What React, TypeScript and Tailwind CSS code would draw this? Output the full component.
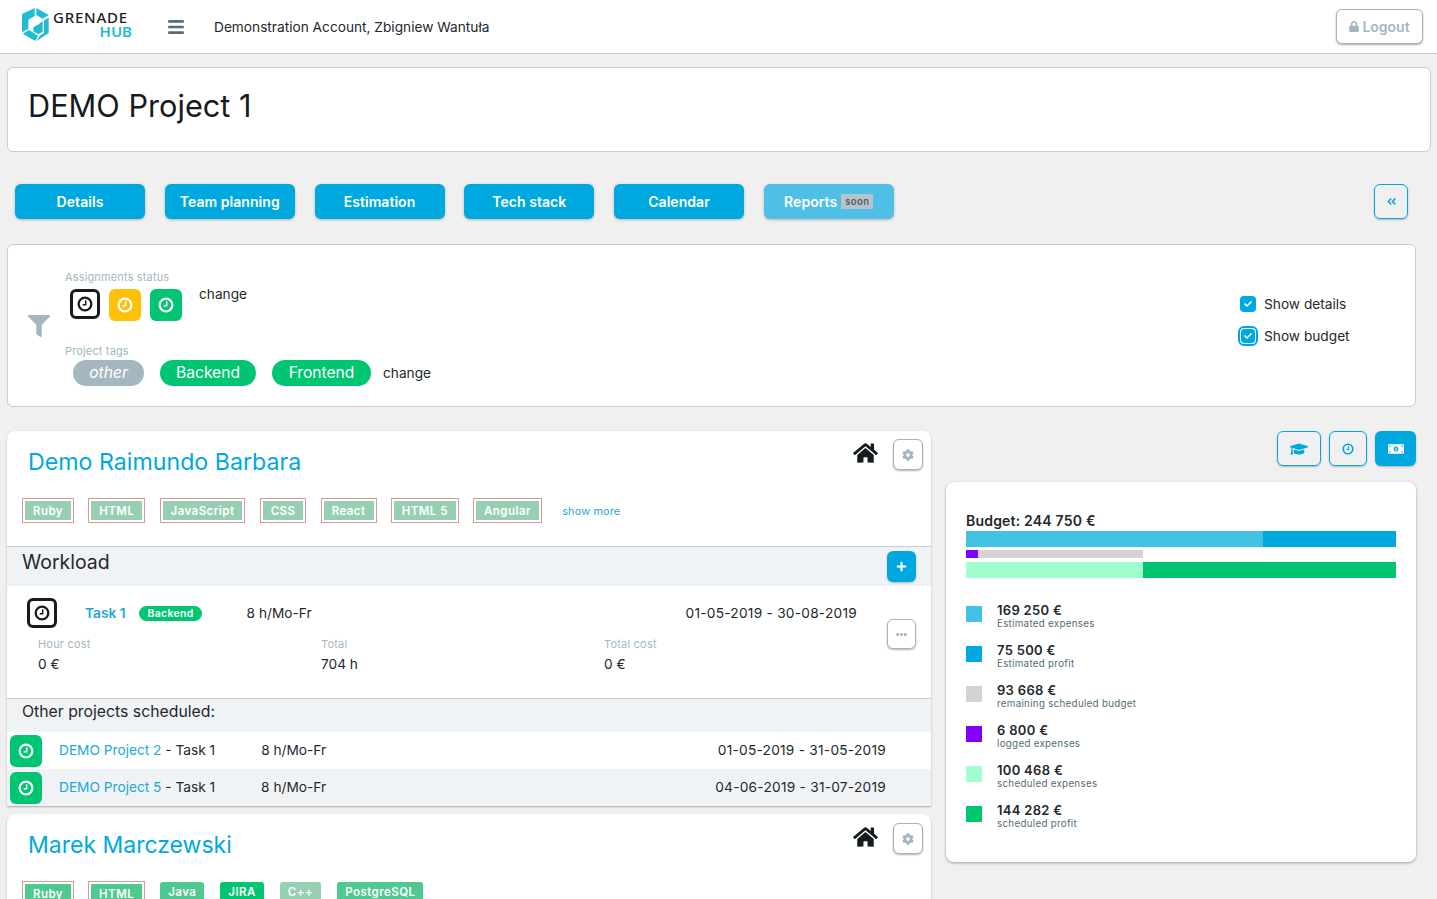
import { FaAngleDoubleLeft, FaBars, FaCheck, FaCog, FaEllipsisH, FaFilter, FaGraduationCap, FaHome, FaLock, FaMoneyBillAlt, FaPlus } from 'react-icons/fa'

const ClockIcon = ({ className }: { className: string }) => (
  <svg viewBox="0 0 24 24" fill="none" stroke="currentColor" className={className}>
    <circle cx="12" cy="12" r="9.5" strokeWidth="3.4" />
    <path d="M13 6.5v6.5H8.5" strokeWidth="2.2" />
  </svg>
)

const Logo = () => (
  <svg viewBox="0 0 108 114" className="w-[36px] h-[38px] mb-[5px] shrink-0">
    <g fill="#1fbcd2">
      <path d="M50 9V33L31 44V72L12 82V27Z" />
      <path d="M55 9L92 30L74 41L55 30Z" />
      <path d="M62 58L74 48V80L60 88L46 79V67Z" />
      <path d="M14 86L33 75L60 92L52 108Z" />
      <path d="M78 46L92 38V84L56 108L65 92L78 84Z" />
    </g>
  </svg>
)

const StatusIcon = ({ tone }: { tone: 'dark' | 'amber' | 'green' }) => {
  if (tone === 'dark') {
    return (
      <span className="flex items-center justify-center rounded-md border-[3px] border-[#151b1e] text-[#151b1e] bg-white w-[30px] h-[30px]">
        <ClockIcon className="w-[16px] h-[16px]" />
      </span>
    )
  }
  return (
    <span className={`flex items-center justify-center rounded-md w-[32px] h-[32px] text-white ${tone === 'amber' ? 'bg-[#ffc107]' : 'bg-[#00c571]'}`}>
      <ClockIcon className="w-[16px] h-[16px]" />
    </span>
  )
}

const TechTag = ({ label, framed, tone }: { label: string; framed?: boolean; tone?: string }) => {
  if (framed) {
    return (
      <span className="border border-[#d79a9a] p-[2px] block">
        <span className={`block px-[8px] h-[19px] leading-[20px] text-[11.5px] font-semibold tracking-[0.45px] text-white ${tone ?? 'bg-[#97cfb3]'}`}>{label}</span>
      </span>
    )
  }
  return <span className={`block rounded-[3px] px-[8px] h-[19px] leading-[20px] text-[11.5px] font-semibold tracking-[0.45px] text-white ${tone}`}>{label}</span>
}

const NavButton = ({ label, soon }: { label: string; soon?: boolean }) => (
  <button className={`w-[130px] h-[35px] rounded-md text-white text-[14px] font-semibold tracking-[0.05px] shadow-[0_1px_3px_rgba(0,0,0,0.25)] flex items-center justify-center ${soon ? 'bg-[#50bfe6]' : 'bg-[#00a8e0]'}`}>
    {label}
    {soon && <span className="ml-[4px] bg-[#b5c4cc] text-[#4f5d66] text-[9.5px] px-[4px] h-[15px] leading-[15px] tracking-[0.4px]">soon</span>}
  </button>
)

const LineButton = ({ children, className }: { children: React.ReactNode; className: string }) => (
  <button className={`flex items-center justify-center rounded-md bg-white border border-[#a4b7c1] shadow-[0_1px_2px_rgba(0,0,0,0.3)] text-[#a4b7c1] ${className}`}>{children}</button>
)

const legend = [
  { color: 'bg-[#41c2e3]', value: '169 250 €', label: 'Estimated expenses' },
  { color: 'bg-[#00a8e0]', value: '75 500 €', label: 'Estimated profit' },
  { color: 'bg-[#d6d1d6]', value: '93 668 €', label: 'remaining scheduled budget' },
  { color: 'bg-[#7f00ff]', value: '6 800 €', label: 'logged expenses' },
  { color: 'bg-[#a0ffcd]', value: '100 468 €', label: 'scheduled expenses' },
  { color: 'bg-[#00c571]', value: '144 282 €', label: 'scheduled profit' },
]

const App = () => {
  return (
    <div className="h-[899px] overflow-hidden bg-[#f0f0f0] text-[#23282c] font-['Inter',sans-serif] text-[13.7px]">
      {/* header */}
      <header className="h-[54px] bg-white border-b border-[#c2cfd6] flex items-center pl-[18px] pr-[14px]">
        <Logo />
        <div className="-ml-[1px] w-[79px] font-['Noto_Sans',sans-serif] mb-[5px]">
          <div className="text-[15px] h-[14px] leading-[14px] font-medium text-[#1a1f22] tracking-[0.75px]">GRENADE</div>
          <div className="text-[15px] h-[14px] leading-[14px] font-semibold text-[#1fbcd2] text-right">HUB</div>
        </div>
        <FaBars className="ml-[36px] w-[16px] h-[18px] text-[#536c79]" />
        <span className="ml-[30px] mt-[1px]">Demonstration Account, Zbigniew Wantuła</span>
        <button className="ml-auto w-[87px] h-[35px] rounded-md bg-white border border-[#a4b7c1] shadow-[0_1px_2px_rgba(0,0,0,0.35)] text-[#a4b7c1] font-semibold text-[14px] flex items-center justify-center gap-[3px]">
          <FaLock className="w-[10px] h-[11px]" />
          Logout
        </button>
      </header>

      <div className="pl-[7px] pr-[6px] pt-[13px]">
        {/* title */}
        <div className="h-[85px] bg-white border border-[#c2cfd6] rounded-md pl-[20px] pt-[19px]">
          <h1 className="text-[30.7px] leading-[38px] text-[#151b1e]">DEMO Project 1</h1>
        </div>

        {/* nav */}
        <div className="mt-[31px] h-[36px] pl-[8px] pr-[23px] flex items-center">
          <div className="flex gap-[19.75px]">
            <NavButton label="Details" />
            <NavButton label="Team planning" />
            <NavButton label="Estimation" />
            <NavButton label="Tech stack" />
            <NavButton label="Calendar" />
            <NavButton label="Reports" soon />
          </div>
          <button className="ml-auto w-[34px] h-[35px] rounded-md border border-[#00a8e0] shadow-[0_1px_2px_rgba(0,0,0,0.25)] text-[#20a8d8] flex items-center justify-center">
            <FaAngleDoubleLeft className="w-[11px] h-[11px]" />
          </button>
        </div>

        {/* filters */}
        <div className="mt-[25px] mr-[15px] h-[163px] bg-white border border-[#c2cfd6] rounded-md flex">
          <div className="w-[57px] flex justify-end pt-[70px] pr-[15px] shrink-0">
            <FaFilter className="w-[22px] h-[22px] shrink-0 text-[#a4b7c1]" />
          </div>
          <div className="pt-[26px]">
            <div className="text-[11px] leading-[13px] text-[#a4b7c1] tracking-[0.15px]">Assignments status</div>
            <div className="flex items-start mt-[5px] pl-[5px]">
              <StatusIcon tone="dark" />
              <span className="ml-[9px]"><StatusIcon tone="amber" /></span>
              <span className="ml-[9px]"><StatusIcon tone="green" /></span>
              <span className="ml-[17px] leading-[17px] -mt-[3px]">change</span>
            </div>
            <div className="mt-[24px] text-[11px] leading-[13px] text-[#a4b7c1] tracking-[0.15px]">Project tags</div>
            <div className="flex items-center pl-[8px] mt-[2px] text-[15.6px]">
              <span className="w-[71px] h-[26px] rounded-full bg-[#a4b7c1] text-white italic flex items-center justify-center">other</span>
              <span className="ml-[16px] w-[96px] h-[26px] rounded-full bg-[#00c571] text-white flex items-center justify-center">Backend</span>
              <span className="ml-[16px] w-[99px] h-[26px] rounded-full bg-[#00c571] text-white flex items-center justify-center">Frontend</span>
              <span className="ml-[12px] text-[13.7px]">change</span>
            </div>
          </div>
          <div className="ml-auto w-[175px] pt-[51px] shrink-0">
            <label className="flex items-center h-[16px]">
              <span className="w-[16px] h-[16px] rounded-[4px] bg-[#00a8e0] text-white flex items-center justify-center"><FaCheck className="w-[8px] h-[8px]" /></span>
              <span className="ml-[8px]">Show details</span>
            </label>
            <label className="flex items-center h-[16px] mt-[16px]">
              <span className="w-[16px] h-[16px] rounded-[4px] bg-[#00a8e0] text-white flex items-center justify-center outline-2 outline-[#00a8e0] border border-white"><FaCheck className="w-[8px] h-[8px]" /></span>
              <span className="ml-[8px]">Show budget</span>
            </label>
          </div>
        </div>

        {/* main columns */}
        <div className="mt-[24px] flex items-start">
          <div className="w-[924px] shrink-0 flex flex-col gap-[8px]">
            {/* first person */}
            <section className="bg-white rounded-t-lg shadow-[0_1px_2px_rgba(0,0,0,0.3)]">
              <div className="h-[115px] relative pl-[15px]">
                <h2 className="pl-[6px] pt-[16px] text-[23.2px] leading-[31px] text-[#00a8e0]">Demo Raimundo Barbara</h2>
                <div className="flex items-center gap-[14.2px] mt-[20px]">
                  <TechTag framed label="Ruby" />
                  <TechTag framed label="HTML" />
                  <TechTag framed label="JavaScript" />
                  <TechTag framed label="CSS" />
                  <TechTag framed label="React" />
                  <TechTag framed label="HTML 5" />
                  <TechTag framed label="Angular" />
                  <span className="ml-[6px] text-[10.8px] text-[#20a8d8] tracking-[0.2px] mt-[4px]">show more</span>
                </div>
                <FaHome className="absolute left-[846px] top-[11px] w-[25px] h-[22px] text-[#151b1e]" />
                <LineButton className="absolute left-[886px] top-[8px] w-[30px] h-[31px]">
                  <FaCog className="w-[12px] h-[12px]" />
                </LineButton>
              </div>
              <div className="h-[40px] border-t border-[#c2cfd6] bg-[#f0f3f5] flex pl-[15px] pr-[15px]">
                <span className="text-[19.5px] leading-[31px]">Workload</span>
                <button className="ml-auto mt-[4px] w-[29px] h-[31px] rounded-md bg-[#00a8e0] shadow-[0_1px_2px_rgba(0,0,0,0.25)] text-white flex items-center justify-center">
                  <FaPlus className="w-[11px] h-[11px]" />
                </button>
              </div>
              <div className="h-[112px] pt-[12px] relative">
                <div className="flex items-center h-[30px] pl-[20px]">
                  <StatusIcon tone="dark" />
                  <a className="ml-[28px] text-[#20a8d8] font-semibold">Task 1</a>
                  <span className="ml-[14px] rounded-full bg-[#00c571] text-white text-[10.5px] font-semibold tracking-[0.3px] px-[8px] h-[15px] leading-[15px]">Backend</span>
                  <span className="ml-[45px]">8 h/Mo-Fr</span>
                  <span className="ml-auto mr-[74px] tracking-[0.25px]">01-05-2019 - 30-08-2019</span>
                </div>
                <div className="grid grid-cols-[283px_283px_1fr] pl-[31px] mt-[10px] w-[879px]">
                  <div>
                    <div className="text-[11px] text-[#a4b7c1] leading-[13px] tracking-[0.2px]">Hour cost</div>
                    <div className="mt-[5px] leading-[17px]">0 €</div>
                  </div>
                  <div>
                    <div className="text-[11px] text-[#a4b7c1] leading-[13px] tracking-[0.2px]">Total</div>
                    <div className="mt-[5px] leading-[17px]">704 h</div>
                  </div>
                  <div>
                    <div className="text-[11px] text-[#a4b7c1] leading-[13px] tracking-[0.2px]">Total cost</div>
                    <div className="mt-[5px] leading-[17px]">0 €</div>
                  </div>
                </div>
                <LineButton className="absolute left-[880px] top-[33px] w-[29px] h-[30px]">
                  <FaEllipsisH className="w-[11px] h-[11px]" />
                </LineButton>
              </div>
              <div className="h-[34px] border-t border-[#c2cfd6] bg-[#f0f3f5] pl-[15px] pt-[4px] text-[15.8px] leading-[18px]">Other projects scheduled:</div>
              <div className="h-[37px] flex items-center pl-[3px]">
                <StatusIcon tone="green" />
                <a className="ml-[17px] text-[#20a8d8]">DEMO Project 2</a>
                <span>&nbsp;- Task 1</span>
                <span className="ml-[46px]">8 h/Mo-Fr</span>
                <span className="ml-auto mr-[45px] tracking-[0.25px]">01-05-2019 - 31-05-2019</span>
              </div>
              <div className="h-[37px] flex items-center pl-[3px] bg-[#f0f3f5]">
                <StatusIcon tone="green" />
                <a className="ml-[17px] text-[#20a8d8]">DEMO Project 5</a>
                <span>&nbsp;- Task 1</span>
                <span className="ml-[46px]">8 h/Mo-Fr</span>
                <span className="ml-auto mr-[45px] tracking-[0.25px]">04-06-2019 - 31-07-2019</span>
              </div>
            </section>

            {/* second person */}
            <section className="bg-white rounded-t-lg shadow-[0_1px_2px_rgba(0,0,0,0.3)] h-[120px] relative pl-[15px]">
              <h2 className="pl-[6px] pt-[16px] text-[23px] leading-[31px] text-[#00a8e0]">Marek Marczewski</h2>
              <div className="flex items-center mt-[20px]">
                <TechTag framed label="Ruby" tone="bg-[#4fc98f]" />
                <span className="ml-[14px]"><TechTag framed label="HTML" tone="bg-[#4fc98f]" /></span>
                <span className="ml-[15px] -mt-[5px]"><TechTag label="Java" tone="bg-[#4fc98f]" /></span>
                <span className="ml-[16px] -mt-[5px]"><TechTag label="JIRA" tone="bg-[#00c571]" /></span>
                <span className="ml-[16px] -mt-[5px]"><TechTag label="C++" tone="bg-[#97cfb3]" /></span>
                <span className="ml-[16px] -mt-[5px]"><TechTag label="PostgreSQL" tone="bg-[#4fc98f]" /></span>
              </div>
              <FaHome className="absolute left-[846px] top-[12px] w-[25px] h-[22px] text-[#151b1e]" />
              <LineButton className="absolute left-[886px] top-[9px] w-[30px] h-[31px]">
                <FaCog className="w-[12px] h-[12px]" />
              </LineButton>
            </section>
          </div>

          {/* right column */}
          <div className="ml-[15px] w-[470px] shrink-0">
            <div className="flex justify-end gap-[8px] h-[36px]">
              <button className="w-[44px] h-[35px] rounded-md border border-[#00a8e0] shadow-[0_1px_2px_rgba(0,0,0,0.25)] text-[#00a8e0] flex items-center justify-center">
                <FaGraduationCap className="w-[18px] h-[18px]" />
              </button>
              <button className="w-[38px] h-[35px] rounded-md border border-[#00a8e0] shadow-[0_1px_2px_rgba(0,0,0,0.25)] text-[#00a8e0] flex items-center justify-center">
                <ClockIcon className="w-[12px] h-[12px]" />
              </button>
              <button className="w-[41px] h-[35px] rounded-md bg-[#00a8e0] shadow-[0_1px_2px_rgba(0,0,0,0.25)] text-white flex items-center justify-center">
                <FaMoneyBillAlt className="w-[16px] h-[16px]" />
              </button>
            </div>
            <div className="mt-[15px] h-[380px] bg-white rounded-lg shadow-[0_1px_3px_rgba(0,0,0,0.35)] px-[20px] pt-[30px]">
              <div className="text-[14px] font-semibold leading-[18px] tracking-[0.2px]">Budget: 244 750 €</div>
              <div className="mt-[1px] flex h-[16px]">
                <div className="w-[297px] bg-[#41c2e3]" />
                <div className="flex-1 bg-[#00a8e0]" />
              </div>
              <div className="mt-[3px] flex h-[8px] w-[177px] bg-[#d6d1d6]">
                <div className="w-[12px] bg-[#7f00ff]" />
              </div>
              <div className="mt-[4px] flex h-[16px]">
                <div className="w-[177px] bg-[#a0ffcd]" />
                <div className="flex-1 bg-[#00c571]" />
              </div>
              <div className="mt-[25px] flex flex-col gap-[13px]">
                {legend.map((item) => (
                  <div key={item.value} className="flex h-[27px]">
                    <div className={`w-[16px] h-[16px] mt-[3px] ${item.color}`} />
                    <div className="ml-[15px]">
                      <div className="text-[13px] font-semibold leading-[15px] tracking-[0.3px]">{item.value}</div>
                      <div className="text-[9.8px] leading-[11px] text-[#536c79] tracking-[0.28px]">{item.label}</div>
                    </div>
                  </div>
                ))}
              </div>
            </div>
          </div>
        </div>
      </div>
    </div>
  )
}

export default App
